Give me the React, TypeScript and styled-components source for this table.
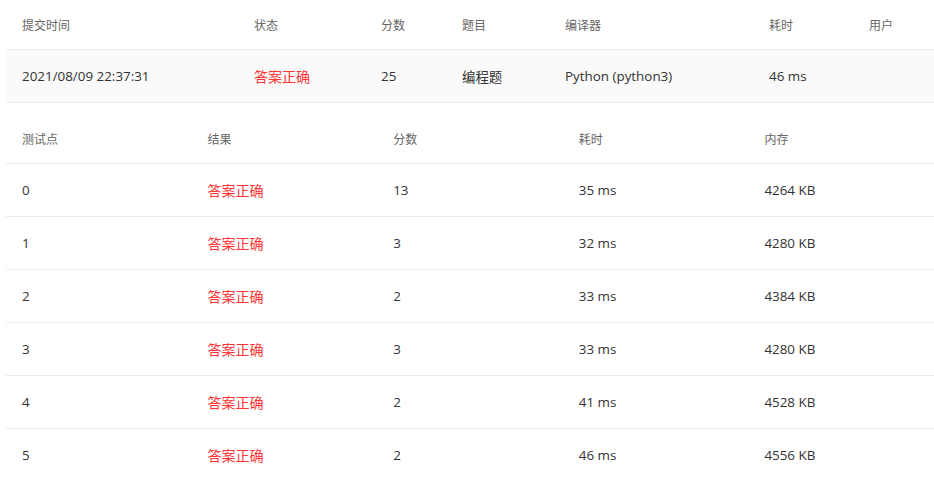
import React from "react";
import styled, { createGlobalStyle } from "styled-components";

const GlobalStyle = createGlobalStyle`
  html, body { margin: 0; padding: 0; background: #fff; }
  body { font-family: "Open Sans", "Noto Sans CJK SC", sans-serif; }
`;

const Page = styled.div`
  padding-left: 6px;
  display: flex;
  flex-direction: column;
  gap: 11px;
`;

const Table = styled.div<{ $cols: string }>`
  display: grid;
  grid-template-columns: ${(p) => p.$cols};
`;

const HeadCell = styled.div`
  height: 49px;
  border-bottom: 1px solid #ebebeb;
  display: flex;
  align-items: center;
  padding-left: 16px;
  font-size: 12px;
  color: #666;
  white-space: nowrap;
`;

const Cell = styled.div<{ $bg?: boolean; $red?: boolean }>`
  height: 52px;
  border-bottom: 1px solid #ebebeb;
  display: flex;
  align-items: center;
  padding-left: 16px;
  font-size: ${(p) => (p.$red ? "14px" : "13.4px")};
  color: ${(p) => (p.$red ? "#f33" : "#333")};
  background: ${(p) => (p.$bg ? "#fafafa" : "#fff")};
  white-space: nowrap;
`;

const topHead = ["提交时间", "状态", "分数", "题目", "编译器", "耗时", "用户"];
const topRow = ["2021/08/09 22:37:31", "答案正确", "25", "编程题", "Python (python3)", "46 ms", ""];

const caseHead = ["测试点", "结果", "分数", "耗时", "内存"];
const cases = [
  ["0", "13", "35 ms", "4264 KB"],
  ["1", "3", "32 ms", "4280 KB"],
  ["2", "2", "33 ms", "4384 KB"],
  ["3", "3", "33 ms", "4280 KB"],
  ["4", "2", "41 ms", "4528 KB"],
  ["5", "2", "46 ms", "4556 KB"],
];

export default function App() {
  return (
    <>
      <GlobalStyle />
      <Page>
        <Table $cols="232px 127px 81px 103px 204px 100px 1fr">
          {topHead.map((h) => (
            <HeadCell key={h}>{h}</HeadCell>
          ))}
          {topRow.map((v, i) => (
            <Cell key={i} $bg $red={i === 1}>
              {v}
            </Cell>
          ))}
        </Table>
        <Table $cols="repeat(5, 1fr)">
          {caseHead.map((h) => (
            <HeadCell key={h}>{h}</HeadCell>
          ))}
          {cases.map((c) => (
            <React.Fragment key={c[0]}>
              <Cell>{c[0]}</Cell>
              <Cell $red>答案正确</Cell>
              <Cell>{c[1]}</Cell>
              <Cell>{c[2]}</Cell>
              <Cell>{c[3]}</Cell>
            </React.Fragment>
          ))}
        </Table>
      </Page>
    </>
  );
}
